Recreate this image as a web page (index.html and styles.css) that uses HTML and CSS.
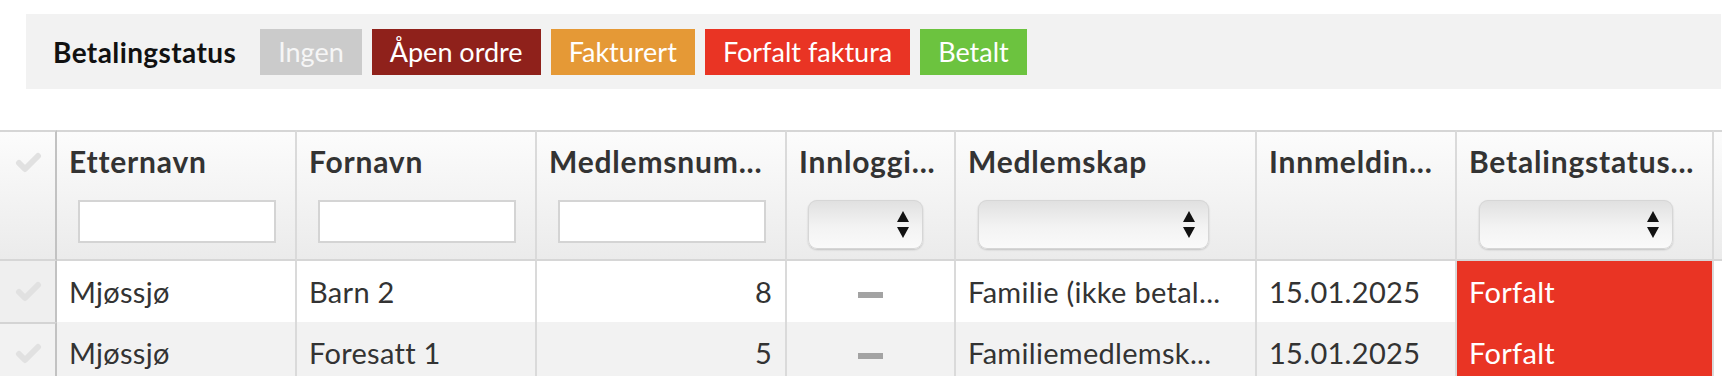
FILE: index.html
```html
<!DOCTYPE html>
<html lang="no">
<head>
  <meta charset="UTF-8" />
  <meta name="viewport" content="width=device-width, initial-scale=1.0"/>
  <title>Medlemmer</title>
  <link rel="stylesheet" href="styles.css">
</head>
<body>

<div class="legend">
  <span class="legend-label">Betalingstatus</span>
  <span class="badge ingen">Ingen</span>
  <span class="badge apen">Åpen ordre</span>
  <span class="badge fakturert">Fakturert</span>
  <span class="badge forfalt">Forfalt faktura</span>
  <span class="badge betalt">Betalt</span>
</div>

<table class="grid">
  <colgroup>
    <col style="width:57px">
    <col style="width:240px">
    <col style="width:240px">
    <col style="width:250px">
    <col style="width:169px">
    <col style="width:301px">
    <col style="width:200px">
    <col style="width:257px">
    <col style="width:46px">
  </colgroup>
  <thead>
    <tr>
      <th class="check-col">
        <svg class="check" width="27" height="21" viewBox="0 0 27 21"><path d="M4 11 L10 17 L23 4" /></svg>
      </th>
      <th>
        <div class="title">Etternavn</div>
        <div class="filter"><input type="text"></div>
      </th>
      <th>
        <div class="title">Fornavn</div>
        <div class="filter"><input type="text"></div>
      </th>
      <th>
        <div class="title">Medlemsnum...</div>
        <div class="filter"><input type="text"></div>
      </th>
      <th>
        <div class="title">Innloggi...</div>
        <div class="filter"><div class="select sel-sm"><span class="arrows"><i class="up"></i><i class="down"></i></span></div></div>
      </th>
      <th>
        <div class="title">Medlemskap</div>
        <div class="filter"><div class="select"><span class="arrows"><i class="up"></i><i class="down"></i></span></div></div>
      </th>
      <th>
        <div class="title">Innmeldin...</div>
      </th>
      <th>
        <div class="title">Betalingstatus...</div>
        <div class="filter"><div class="select"><span class="arrows"><i class="up"></i><i class="down"></i></span></div></div>
      </th>
      <th class="rest"></th>
    </tr>
  </thead>
  <tbody>
    <tr>
      <td class="check-col"><svg class="check" width="27" height="21" viewBox="0 0 27 21"><path d="M4 11 L10 17 L23 4" /></svg></td>
      <td>Mjøssjø</td>
      <td>Barn 2</td>
      <td class="num">8</td>
      <td class="center"><span class="dash"></span></td>
      <td>Familie (ikke betal...</td>
      <td>15.01.2025</td>
      <td class="status-forfalt">Forfalt</td>
      <td class="rest"></td>
    </tr>
    <tr>
      <td class="check-col"><svg class="check" width="27" height="21" viewBox="0 0 27 21"><path d="M4 11 L10 17 L23 4" /></svg></td>
      <td>Mjøssjø</td>
      <td>Foresatt 1</td>
      <td class="num">5</td>
      <td class="center"><span class="dash"></span></td>
      <td>Familiemedlemsk...</td>
      <td>15.01.2025</td>
      <td class="status-forfalt">Forfalt</td>
      <td class="rest"></td>
    </tr>
  </tbody>
</table>

</body>
</html>
```

FILE: styles.css
```css
html, body {
  overflow: hidden;
}
body {
  margin: 0;
  background: #fff;
  font-family: Lato, "Liberation Sans", Arial, sans-serif;
  color: #333;
}

/* fargeforklaring */
.legend {
  display: flex;
  align-items: center;
  gap: 10px;
  height: 75px;
  margin: 14px 1px 0 26px;
  padding-left: 27px;
  background: #f2f2f2;
}
.legend-label {
  font-weight: bold;
  font-size: 28px;
  letter-spacing: 0.4px;
  color: #111;
  margin-right: 14px;
}
.badge {
  display: flex;
  align-items: center;
  height: 46px;
  padding: 0 18px;
  font-size: 27px;
  color: #fff;
}
.ingen { background: #cbcbcb; color: #f6f6f6; }
.apen { background: #8f211b; }
.fakturert { background: #e59936; }
.forfalt { background: #e93424; }
.betalt { background: #6cc33f; }

/* tabell */
.grid {
  margin-top: 41px;
  width: 1760px;
  table-layout: fixed;
  border-collapse: separate;
  border-spacing: 0;
}
.grid th, .grid td {
  box-sizing: border-box;
  border-right: 2px solid #dadada;
}
.grid th {
  vertical-align: top;
  text-align: left;
  padding: 12px 12px 16px;
  background: linear-gradient(#fcfcfc, #ebebeb);
  border-top: 2px solid #d6d6d6;
  border-bottom: 2px solid #d6d6d6;
}
.title {
  font-size: 30px;
  line-height: 34px;
  height: 32px;
  font-weight: bold;
  letter-spacing: 0.8px;
  color: #333;
  white-space: nowrap;
}
.filter {
  margin-top: 24px;
  height: 43px;
}
.filter input {
  box-sizing: border-box;
  display: block;
  width: calc(100% - 16px);
  height: 43px;
  margin: 0 0 0 9px;
  border: 2px solid #d4d4d4;
  background: #fff;
  outline: none;
}
.select {
  box-sizing: border-box;
  display: flex;
  justify-content: flex-end;
  align-items: center;
  width: 84%;
  height: 49px;
  margin-left: 10px;
  padding-right: 14px;
  border-radius: 9px;
  background: linear-gradient(#e0e0e0, #f3f3f3 55%, #fafafa);
  box-shadow: inset 0 0 0 1px #d6d6d6, 0 1px 2px rgba(0, 0, 0, 0.18);
}
.select.sel-sm {
  width: 115px;
  margin-left: 9px;
}
.arrows {
  display: flex;
  flex-direction: column;
  gap: 5px;
}
.arrows i {
  width: 0;
  height: 0;
  border-left: 6.5px solid transparent;
  border-right: 6.5px solid transparent;
}
.arrows .up { border-bottom: 11px solid #111; }
.arrows .down { border-top: 11px solid #111; }

.grid th.check-col {
  padding: 20px 0 0 15px;
  border-right: 2px solid #c2c2c2;
}
.grid td.check-col {
  padding: 0 0 0 15px;
  background: #efefef;
  border-right: 2px solid #c2c2c2;
}
.grid tbody tr + tr td.check-col {
  border-top: 2px solid #d4d4d4;
}
.check {
  display: block;
}
.check path {
  fill: none;
  stroke: #e1e1e1;
  stroke-width: 6;
  stroke-linecap: round;
  stroke-linejoin: round;
}

.grid td {
  height: 61px;
  padding: 0 12px;
  font-size: 29px;
  line-height: 34px;
  letter-spacing: 0.3px;
  color: #333;
  white-space: nowrap;
  vertical-align: middle;
  background: #fff;
}
.grid tbody tr:nth-child(2) td {
  background: #f2f2f2;
}
.grid td.num {
  text-align: right;
  padding-right: 13px;
}
.grid td.center {
  text-align: center;
}
.dash {
  display: inline-block;
  width: 25px;
  height: 6px;
  background: #a3a3a3;
  vertical-align: middle;
}
.grid tbody tr td.status-forfalt {
  background: #e93424;
  color: #fff;
}
.grid th.rest {
  border-right: none;
}
.grid tbody tr td.rest {
  background: #fff;
  border-right: none;
}
```
